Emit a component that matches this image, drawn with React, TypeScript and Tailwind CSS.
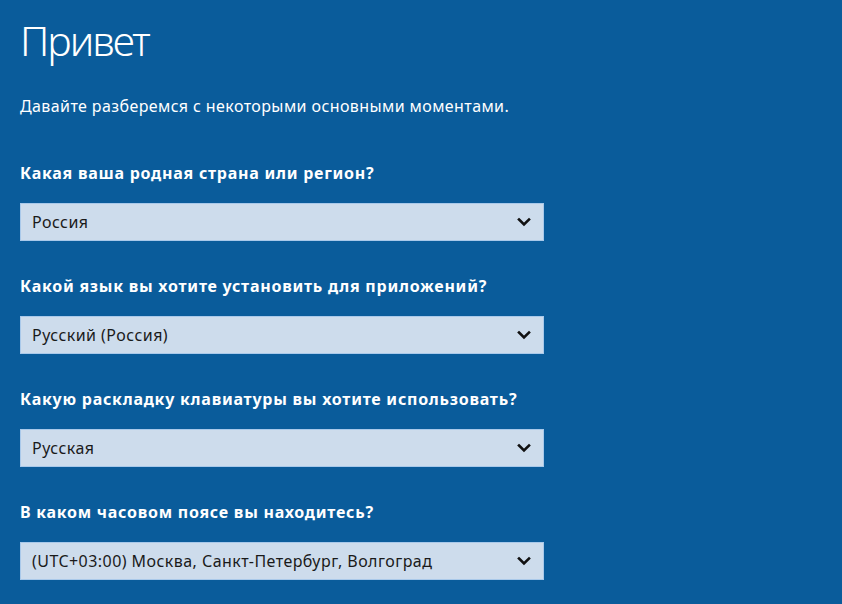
import React from "react";

const Chevron = () => (
  <svg width="14" height="10" viewBox="0 0 14 10" className="shrink-0">
    <path d="M2 2.5 L7 7.5 L12 2.5" fill="none" stroke="#111" strokeWidth="2.6" strokeLinecap="square" />
  </svg>
);

const Field = ({ label, value }: { label: string; value: string }) => (
  <div className="flex flex-col">
    <div className="h-[30px] flex items-center text-[16px] font-bold tracking-[0.75px] text-white leading-none">{label}</div>
    <div className="mt-[15px] w-[524px] h-[38px] bg-[#cddcec] border border-[#a9c9ea] flex items-center justify-between pl-[11px] pr-[12px]">
      <span className="text-[16px] tracking-[0.45px] text-[#1a1a1a] leading-none">{value}</span>
      <Chevron />
    </div>
  </div>
);

export default function App() {
  return (
    <div className="w-[842px] h-[604px] bg-[#0a5c9b] overflow-hidden pl-[20px] pt-[16px]" style={{ fontFamily: '"Noto Sans", "Open Sans", sans-serif' }}>
      <div className="text-[41px] font-light text-white leading-[48px] tracking-[-2px]">Привет</div>
      <div className="mt-[32px] text-[16px] text-white leading-[20px] tracking-[0.4px]">Давайте разберемся с некоторыми основными моментами.</div>
      <div className="mt-[42px] flex flex-col gap-[30px]">
        <Field label="Какая ваша родная страна или регион?" value="Россия" />
        <Field label="Какой язык вы хотите установить для приложений?" value="Русский (Россия)" />
        <Field label="Какую раскладку клавиатуры вы хотите использовать?" value="Русская" />
        <Field label="В каком часовом поясе вы находитесь?" value="(UTC+03:00) Москва, Санкт-Петербург, Волгоград" />
      </div>
    </div>
  );
}
